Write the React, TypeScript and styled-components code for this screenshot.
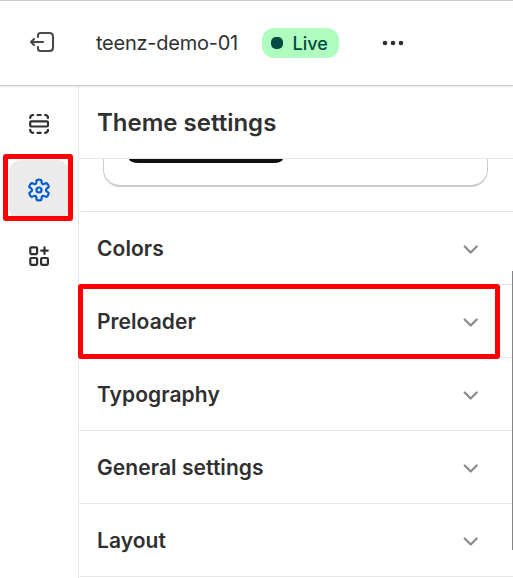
import React from "react";
import styled, { createGlobalStyle } from "styled-components";

const GlobalStyle = createGlobalStyle`
  * { box-sizing: border-box; }
  body { margin: 0; background: #fff; overflow: hidden; }
`;

const Page = styled.div`
  position: relative;
  display: flex;
  flex-direction: column;
  width: 513px;
  height: 578px;
  overflow: hidden;
  background: #fff;
  color: #303030;
  font-family: Inter, "Liberation Sans", sans-serif;
`;

const TopBar = styled.header`
  position: relative;
  display: flex;
  align-items: center;
  flex: 0 0 86px;
  padding-left: 28px;
  border-top: 1px solid #c9c9c9;
  border-bottom: 1px solid #cacaca;
  box-shadow: 0 1px 2px rgba(0, 0, 0, 0.1);
  svg { display: block; }
`;

const ExitButton = styled.div`
  width: 28px;
  height: 28px;
  margin: 0 40px 2px 0;
`;

const ThemeName = styled.span`
  width: 166px;
  padding-bottom: 1px;
  font-size: 20px;
  line-height: 28px;
  letter-spacing: -0.24px;
  white-space: nowrap;
`;

const Badge = styled.span`
  display: flex;
  align-items: center;
  gap: 9.5px;
  width: 77px;
  height: 30px;
  margin-right: 43px;
  padding: 1px 0 0 9px;
  border-radius: 12px;
  background: #affebf;
  color: #014b40;
  font-size: 18px;
  font-weight: 450;
`;

const Dot = styled.i`
  width: 12px;
  height: 12px;
  margin-top: -2px;
  border-radius: 5px;
  background: #014b40;
`;

const Body = styled.div`
  display: flex;
  flex: 1;
  min-height: 0;
`;

const Rail = styled.nav`
  flex: 0 0 79px;
  display: flex;
  flex-direction: column;
  padding: 8px 0 0 9px;
  border-right: 1px solid #e8e8e8;
`;

const RailItem = styled.div<{ $active?: boolean }>`
  position: relative;
  display: flex;
  align-items: center;
  justify-content: center;
  width: 60px;
  height: 60px;
  margin-bottom: 6px;
  border-radius: 12px;
  background: ${(p) => (p.$active ? "#ebebeb" : "transparent")};
  svg { display: block; }
`;

const Highlight = styled.div<{ $inset: string }>`
  position: absolute;
  inset: ${(p) => p.$inset};
  border: 5px solid #ff0000;
  border-radius: 3px;
  pointer-events: none;
`;

const Panel = styled.main`
  flex: 1;
  display: flex;
  flex-direction: column;
  min-width: 0;
`;

const Title = styled.h1`
  flex: 0 0 73px;
  height: 73px;
  min-height: 0;
  margin: 0;
  padding-left: 18px;
  border-bottom: 1px solid #e8e8e8;
  font-size: 24px;
  font-weight: 600;
  line-height: 73px;
`;

const Preview = styled.section`
  flex: 0 0 53px;
  padding: 0 25px 24px 24px;
  border-bottom: 1px solid #e8e8e8;
`;

const Card = styled.div`
  height: 28px;
  padding-left: 25px;
  border: solid #cccccc;
  border-width: 0 1px 2px 1px;
  border-radius: 0 0 17px 17px;
  overflow: hidden;
`;

const DarkStrip = styled.div`
  width: 154px;
  height: 4px;
  border-radius: 0 0 9px 9px / 0 0 4px 4px;
  background: #111;
`;

const Row = styled.div`
  position: relative;
  display: flex;
  align-items: center;
  justify-content: space-between;
  flex: 0 0 73px;
  padding: 1px 34.5px 0 18px;
  border-bottom: 1px solid #e8e8e8;
  font-size: 21px;
  font-weight: 600;
  letter-spacing: 0.07px;
`;

const ScrollThumb = styled.div`
  position: absolute;
  top: 271px;
  right: 0;
  width: 1px;
  height: 279px;
  background: #858585;
`;

const ExitIcon = () => (
  <svg width="28" height="28" viewBox="0 0 28 28" fill="none" stroke="#4a4a4a" strokeWidth="2.1" strokeLinecap="round" strokeLinejoin="round">
    <path d="M10 9V7.500Q10 5 12.500 5H21.500Q25 5 25 8.500V19.500Q25 23 21.500 23H12.500Q10 23 10 20.500V19M15 14H3M6 10.900L3 14L6 17.100" />
  </svg>
);

const SectionsIcon = () => (
  <svg width="22" height="22" viewBox="0 0 22 22" fill="none" stroke="#303030" strokeWidth="2.2" strokeLinecap="round">
    <rect x="2.200" y="8.300" width="17.800" height="5.200" rx="1.200" />
    <path d="M2.200 5Q2.200 2 5.200 2M9.500 2H12.700M17 2Q20 2 20 5M2.200 16.800Q2.200 19.800 5.200 19.800M9.500 19.800H12.700M17 19.800Q20 19.800 20 16.800" />
  </svg>
);

type Point = [number, number];

// Six teeth, with every corner softened between the midpoints of its edges.
const gearPath = (() => {
  const tooth: Point[] = [
    [-2.7, -6.5], [-2.5, -9], [-2.2, -10.4], [2.2, -10.4], [2.5, -9], [2.7, -6.5],
  ];
  const points: Point[] = [];
  for (let i = 0; i < 6; i++) {
    const a = (i * Math.PI) / 3;
    for (const [x, y] of tooth) {
      points.push([
        12 + x * Math.cos(a) - y * Math.sin(a),
        12 + x * Math.sin(a) + y * Math.cos(a),
      ]);
    }
  }
  const mid = (a: Point, b: Point) => `${(a[0] + b[0]) / 2} ${(a[1] + b[1]) / 2}`;
  const last = points[points.length - 1];
  return `M${mid(last, points[0])}` + points
    .map((p, i) => `Q${p[0]} ${p[1]} ${mid(p, points[(i + 1) % points.length])}`)
    .join("") + "Z";
})();

const GearIcon = () => (
  <svg width="24" height="24" viewBox="0 0 24 24" fill="none" stroke="#005bd3" strokeWidth="2.2" strokeLinejoin="round">
    <path d={gearPath} />
    <circle cx="12" cy="12" r="2.500" />
  </svg>
);

const AppsIcon = () => (
  <svg width="22" height="22" viewBox="0 0 22 22" fill="none" stroke="#303030" strokeWidth="2.2" strokeLinecap="round">
    <rect x="2.300" y="2.300" width="6.800" height="6.800" rx="1" />
    <rect x="2.300" y="13" width="6.800" height="6.800" rx="1" />
    <rect x="13.100" y="13" width="6.800" height="6.800" rx="1" />
    <path d="M16.500 2.300V8.900M13.200 5.600H19.800" />
  </svg>
);

const Chevron = () => (
  <svg width="16" height="10" viewBox="0 0 16 10" fill="none" stroke="#8a8a8a" strokeWidth="2.2" strokeLinecap="round" strokeLinejoin="round">
    <path d="M1.700 2.500L7.700 8.500L13.700 2.500" />
  </svg>
);

const sections = ["Colors", "Preloader", "Typography", "General settings", "Layout"];

export default function App() {
  return (
    <Page>
      <GlobalStyle />
      <TopBar>
        <ExitButton><ExitIcon /></ExitButton>
        <ThemeName>teenz-demo-01</ThemeName>
        <Badge><Dot />Live</Badge>
        <svg width="22" height="6" viewBox="0 0 22 6" fill="#303030">
          <circle cx="3" cy="3" r="2.300" /><circle cx="11" cy="3" r="2.300" /><circle cx="19" cy="3" r="2.300" />
        </svg>
      </TopBar>
      <Body>
        <Rail>
          <RailItem><SectionsIcon /></RailItem>
          <RailItem $active><GearIcon /><Highlight $inset="-6px -4px -1px -6px" /></RailItem>
          <RailItem><AppsIcon /></RailItem>
        </Rail>
        <Panel>
          <Title>Theme settings</Title>
          <Preview><Card><DarkStrip /></Card></Preview>
          {sections.map((name) => (
            <Row key={name}>
              <span>{name}</span>
              <Chevron />
              {name === "Preloader" && <Highlight $inset="-1px 13px -2px -1px" />}
            </Row>
          ))}
        </Panel>
      </Body>
      <ScrollThumb />
    </Page>
  );
}
